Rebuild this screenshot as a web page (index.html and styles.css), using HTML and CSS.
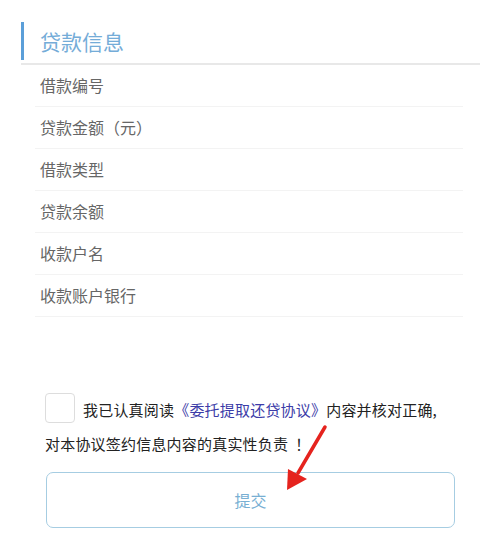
FILE: index.html
```html
<!DOCTYPE html>
<html lang="zh-CN">
<head>
<meta charset="utf-8">
<link rel="stylesheet" href="styles.css">
</head>
<body>
<div class="page">
  <div class="section-title"><div class="title-text">贷款信息</div></div>
  <div class="rows">
    <div class="row">借款编号</div>
    <div class="row">贷款金额（元）</div>
    <div class="row">借款类型</div>
    <div class="row">贷款余额</div>
    <div class="row">收款户名</div>
    <div class="row">收款账户银行</div>
  </div>
  <div class="agree">
    <span class="checkbox"></span>我已认真阅读<span class="link">《委托提取还贷协议》</span>内容并核对正确,<br>对本协议签约信息内容的真实性负责<span class="bang">！</span>
  </div>
  <div class="submit">提交</div>
  <svg class="arrow" width="500" height="541" viewBox="0 0 500 541">
    <line x1="325" y1="427" x2="298" y2="473" stroke="#e5231e" stroke-width="3.5" stroke-linecap="round"/>
    <polygon points="287,490 288,469 307,479" fill="#e5231e"/>
  </svg>
</div>
</body>
</html>
```
FILE: styles.css
```css
html, body {
  margin: 0;
  padding: 0;
  background: #ffffff;
}
.page {
  position: relative;
  width: 500px;
  height: 541px;
  overflow: hidden;
  font-family: "Noto Sans CJK SC", "Noto Sans", sans-serif;
}
.section-title {
  margin: 22px 20px 0 21px;
  padding-bottom: 3px;
  border-bottom: 2px solid #e8e8e8;
}
.title-text {
  border-left: 3px solid #5b9fd9;
  height: 38px;
  line-height: 39px;
  padding-left: 16px;
  font-size: 21px;
  color: #74acd8;
}
.rows {
  margin: 0 37px 0 35px;
}
.row {
  height: 41px;
  line-height: 41px;
  padding-left: 5px;
  border-bottom: 1px solid #f3f3f3;
  font-size: 16px;
  color: #666666;
}
.agree {
  margin: 76px 30px 0 45px;
  font-size: 15px;
  line-height: 33px;
  letter-spacing: 0.2px;
  color: #222222;
}
.checkbox {
  display: inline-block;
  width: 28px;
  height: 28px;
  border: 1px solid #dddddd;
  border-radius: 4px;
  vertical-align: middle;
  margin-right: 8px;
  position: relative;
  top: -4px;
}
.link {
  color: #3c3ca8;
}
.bang {
  margin-left: 7px;
}
.submit {
  margin: 12px 45px 0 46px;
  height: 54px;
  line-height: 54px;
  border: 1.5px solid #a6cde2;
  border-radius: 7px;
  text-align: center;
  font-size: 16px;
  color: #78afd3;
}
.arrow {
  position: absolute;
  left: 0;
  top: 0;
  pointer-events: none;
}
```
